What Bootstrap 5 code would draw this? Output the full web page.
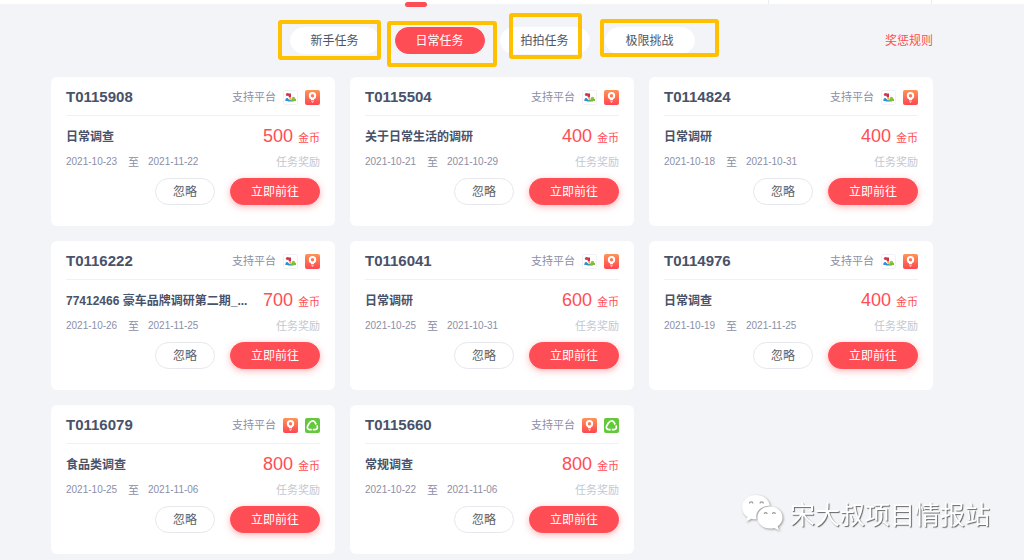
<!DOCTYPE html>
<html lang="zh-CN">
<head>
<meta charset="utf-8">
<meta name="viewport" content="width=device-width, initial-scale=1">
<title>日常任务</title>
<link href="https://cdn.jsdelivr.net/npm/bootstrap@5.3.0/dist/css/bootstrap.min.css" rel="stylesheet">
<style>
  :root { --accent: #ff4d55; --ink: #48526a; --muted: #8c8fa6; --pale: #c4c7d3; }
  body {
    font-family: "Liberation Sans", "Noto Sans CJK SC", sans-serif;
    font-size: 12px; line-height: 16px; color: var(--ink); background: #f3f4f7;
  }
  .topbar { height: 4px; padding-right: 92px; }
  .topbar .tick { width: 164px; border: solid #eceef3; border-width: 0 1px; }
  .topbar .indicator { left: 405px; top: 2px; width: 22px; height: 5px; background: var(--accent); }
  .page { padding: 23px 91px 6px 51px; }
  .pill {
    height: 27px; padding: 0; font-size: 12px; line-height: 1; border-radius: 14px;
    --bs-btn-color: #4f5564; --bs-btn-bg: #fff; --bs-btn-border-color: #fff;
    --bs-btn-hover-bg: #fff; --bs-btn-hover-color: var(--accent);
  }
  .pill-wide { width: 90px; }
  .pill-narrow { width: 60px; --bs-btn-border-color: #e6e8ee; --bs-btn-color: #5c5f66; }
  .pill-red {
    --bs-btn-color: #fff; --bs-btn-bg: var(--accent); --bs-btn-border-color: var(--accent);
    --bs-btn-hover-bg: #f03e47; --bs-btn-hover-color: #fff;
  }
  .glow { box-shadow: 0 2px 7px rgba(255, 77, 85, .4); }
  .tabs { gap: 15px; margin-bottom: 23px; }
  .marker { border: 4px solid #ffc000; border-radius: 3px; pointer-events: none; z-index: 2; }
  .marker-a { inset: -7px -1px -6px -12px; }
  .marker-b { inset: -6px -12px -13px -8px; }
  .marker-c { inset: -14px 8px -5px 9px; }
  .marker-d { inset: -8px -24px -3px -5px; }
  .rules { color: var(--accent); right: 0; top: 6px; }
  .tasks { --bs-gutter-x: 15px; --bs-gutter-y: 15px; }
  .task { border: 0; border-radius: 6px; padding: 0 15px 21px; }
  .task-head { height: 39px; padding-top: 2px; border-bottom: 1px solid #eff1f5; }
  .task-id { font-size: 15px; line-height: 20px; font-weight: 700; }
  .platform { font-size: 11px; color: var(--muted); gap: 7px; }
  .platform svg { width: 15px; height: 15px; }
  .bulb { border-radius: 2px; background: linear-gradient(#ff9357, #ff4651); }
  .task-name { font-size: 12px; line-height: 20px; font-weight: 700; }
  .task-main { height: 38px; padding-top: 3px; }
  .coins { font-size: 18px; line-height: 20px; color: var(--accent); }
  .coins small { font-size: 11px; margin-left: 5px; }
  .dates { font-size: 10px; color: var(--muted); gap: 9px; }
  .dates time { min-width: 53px; }
  .dates span, .reward { font-size: 11px; }
  .reward { color: var(--pale); }
  .actions { gap: 15px; margin-top: 8px; }
  .watermark { right: 34px; bottom: 28px; gap: 7px; }
  .watermark span {
    font-family: "Noto Sans CJK SC", sans-serif; font-size: 25px; line-height: 36px;
    color: #fff; text-shadow: 1px 1px 1px #666;
  }
  .watermark svg { width: 42px; height: 38px; filter: drop-shadow(1px 1px 1px #999); }
</style>
</head>
<body>
<header class="topbar bg-white position-relative d-flex justify-content-end">
  <div class="tick"></div>
  <div class="indicator position-absolute rounded-pill"></div>
</header>

<main class="page">
  <nav class="tabs position-relative d-flex justify-content-center" aria-label="任务分类">
    <div class="position-relative"><button type="button" class="btn pill pill-wide">新手任务</button><div class="marker marker-a position-absolute"></div></div>
    <div class="position-relative"><button type="button" class="btn pill pill-wide pill-red">日常任务</button><div class="marker marker-b position-absolute"></div></div>
    <div class="position-relative"><button type="button" class="btn pill pill-wide">拍拍任务</button><div class="marker marker-c position-absolute"></div></div>
    <div class="position-relative"><button type="button" class="btn pill pill-wide">极限挑战</button><div class="marker marker-d position-absolute"></div></div>
    <a href="#" class="rules position-absolute text-decoration-none">奖惩规则</a>
  </nav>
  <div class="tasks row row-cols-3" id="tasks"></div>
</main>

<div class="watermark position-fixed d-flex align-items-center">
  <svg viewBox="0 0 42 38" aria-hidden="true">
    <path fill="#fff" d="M15 1C7 1 1 6.500 1 13.500c0 4 2 7.500 5.500 9.500L5 27.500l5.500-2.800c1.800.5 3.500.6 5 .5C14 17 20 12 29 11.500 27.500 5 22 1 15 1z"/>
    <path fill="#fff" d="M29 12.500c-7 0-12.500 4.700-12.500 11S22 34.500 29 34.500c1.500 0 3-.2 4.300-.6l4.700 2.500-1.300-4.200c3-2 4.800-5 4.800-8.700 0-6.300-5.500-11-12.500-11z"/>
    <g fill="none" stroke="#999" stroke-width="1.200"><path d="M8.500 9.500a1.700 1.700 0 0 1 3.400 0M19 9.500a1.700 1.700 0 0 1 3.400 0M23.300 20a1.400 1.400 0 0 1 2.800 0M31.500 20a1.400 1.400 0 0 1 2.800 0"/></g>
  </svg>
  <span>宋大叔项目情报站</span>
</div>

<script src="https://cdn.jsdelivr.net/npm/bootstrap@5.3.0/dist/js/bootstrap.bundle.min.js"></script>
<script>
  const icons = {
    people: `<svg viewBox="0 0 15 15"><rect x=".5" y=".5" width="14" height="14" rx="1.500" fill="#fff" stroke="#f1f2f6"/>
      <circle cx="4.400" cy="4.600" r="1.500" fill="#d93a45"/><path d="M4.500 3.500h3.500v4H6z" fill="#c8324a"/>
      <path d="M2.300 11c0-2.200.8-3.400 2.200-3L7.500 11z" fill="#2f8fd6"/><path d="M4.500 11.600l2-1.600 5 .6-1 1z" fill="#2b9fae"/>
      <circle cx="10.500" cy="8.500" r="1.700" fill="#8cc63f"/><path d="M8.500 9h4.500v2H8z" fill="#7dbb3a"/><circle cx="7.300" cy="8.700" r="1" fill="#f3a52f"/></svg>`,
    bulb: `<svg class="bulb" viewBox="0 0 15 15">
      <circle cx="7.500" cy="5.700" r="2.700" fill="none" stroke="#fff" stroke-width="2"/>
      <path d="M6 8.500h3v1.700H6z" fill="#fff"/><path d="M6 11.200h3L7.500 13z" fill="#ffd9d0"/></svg>`,
    recycle: `<svg viewBox="0 0 15 15"><rect width="15" height="15" rx="2" fill="#63c83b"/>
      <g fill="none" stroke="#fff" stroke-width="1.700"><path d="M4.700 4.900C5.600 2.600 8.900 2.300 9.900 4.200l1.300 2.300"/><path d="M11.900 7.300c1.300 2.500.2 4.300-1.900 4.300H7.800"/><path d="M6.700 11.600H4.800c-2.300 0-3-2-2-3.900l1.700-2.900"/></g></svg>`
  };
  const tasks = [
    ["T0115908", "日常调查", 500, "2021-10-23", "2021-11-22", "people", "bulb"],
    ["T0115504", "关于日常生活的调研", 400, "2021-10-21", "2021-10-29", "people", "bulb"],
    ["T0114824", "日常调研", 400, "2021-10-18", "2021-10-31", "people", "bulb"],
    ["T0116222", "77412466 豪车品牌调研第二期_...", 700, "2021-10-26", "2021-11-25", "people", "bulb"],
    ["T0116041", "日常调研", 600, "2021-10-25", "2021-10-31", "people", "bulb"],
    ["T0114976", "日常调查", 400, "2021-10-19", "2021-11-25", "people", "bulb"],
    ["T0116079", "食品类调查", 800, "2021-10-25", "2021-11-06", "bulb", "recycle"],
    ["T0115660", "常规调查", 800, "2021-10-22", "2021-11-06", "bulb", "recycle"]
  ];
  document.getElementById("tasks").innerHTML = tasks.map(([id, name, coins, from, to, a, b]) => `
    <div class="col">
      <article class="card task">
        <div class="task-head d-flex align-items-center justify-content-between">
          <h2 class="task-id m-0">${id}</h2>
          <div class="platform d-flex align-items-center"><span>支持平台</span>${icons[a]}${icons[b]}</div>
        </div>
        <div class="task-main d-flex align-items-center justify-content-between">
          <div class="task-name text-truncate">${name}</div>
          <div class="coins text-nowrap">${coins}<small>金币</small></div>
        </div>
        <div class="d-flex align-items-center justify-content-between">
          <div class="dates d-flex align-items-center"><time>${from}</time><span>至</span><time>${to}</time></div>
          <div class="reward">任务奖励</div>
        </div>
        <div class="actions d-flex justify-content-end">
          <button type="button" class="btn pill pill-narrow">忽略</button>
          <button type="button" class="btn pill pill-wide pill-red glow">立即前往</button>
        </div>
      </article>
    </div>`).join("");
</script>
</body>
</html>
